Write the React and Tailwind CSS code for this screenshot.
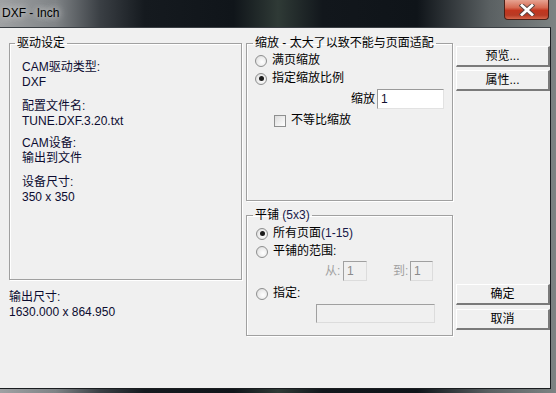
function Radio({ checked }) {
  return (
    <span className="w-[12px] h-[12px] shrink-0 rounded-full border border-[#8e8f8f] bg-[radial-gradient(circle_at_60%_60%,#ffffff_0%,#e9e9e9_60%,#cfcfcf_100%)] flex items-center justify-center">
      {checked && <span className="w-[5px] h-[5px] rounded-full bg-[#1b1b1b]" />}
    </span>
  );
}

function RadioRow({ checked, children, className = "" }) {
  return (
    <div className={"flex items-center gap-[5px] h-[15px] " + className}>
      <Radio checked={checked} />
      <span>{children}</span>
    </div>
  );
}

function Btn({ children, className = "" }) {
  return (
    <div
      className={
        "w-[94px] h-[21px] bg-[#f0f0f0] border-t border-l border-white border-b-2 border-r-2 border-b-[#7a7a7a] border-r-[#7a7a7a] flex items-center justify-center text-[12px] " +
        className
      }
    >
      {children}
    </div>
  );
}

function Field({ label, value, className = "" }) {
  return (
    <div className={className}>
      <div className="h-[15px]">{label}</div>
      <div className="h-[15px]">{value}</div>
    </div>
  );
}

export default function App() {
  return (
    <div className="w-[556px] h-[393px] overflow-hidden flex flex-col bg-[linear-gradient(90deg,#9fa1a3_0%,#7f8386_10%,#3a3f44_18%,#151a1f_26%,#10151a_42%,#2f3a36_50%,#12171c_58%,#0f1419_75%,#5a6062_88%,#7d8383_100%)] font-['Liberation_Sans','Noto_Sans_CJK_SC',sans-serif] text-[12px] leading-[15px] text-black">
      {/* title bar */}
      <div className="h-[27px] shrink-0 flex items-start justify-between">
        <div className="pl-[2px] pt-[6px] text-[12px] text-black [text-shadow:0_0_6px_#e0e0e0,0_0_10px_#c8c8c8]">
          DXF - Inch
        </div>
        <div className="mr-[7px] w-[45px] h-[20px] rounded-b-[4px] border border-t-0 border-[#4a2018] bg-[linear-gradient(180deg,#e6a392_0%,#d66a52_40%,#c2361f_55%,#b83a24_80%,#d4674c_100%)] flex items-center justify-center">
          <svg width="16" height="12" viewBox="0 0 16 12">
            <path d="M3 1.5 L13 10.5 M13 1.5 L3 10.5" stroke="#5a4440" strokeWidth="4.6" strokeLinecap="square" />
            <path d="M3 1.5 L13 10.5 M13 1.5 L3 10.5" stroke="#ffffff" strokeWidth="2.8" strokeLinecap="square" />
          </svg>
        </div>
      </div>

      {/* dialog body */}
      <div className="w-[551px] h-[362px] bg-[#f0f0f0] border-t border-t-[#3a3f44] border-r border-b border-[#1a1d20] flex pt-[8px] pl-[9px]">
        {/* left column */}
        <div className="w-[233px] flex flex-col">
          <fieldset className="h-[244px] border border-[#a0a0a0] shadow-[inset_1px_1px_0_#ffffff,1px_1px_0_#ffffff]">
            <legend className="ml-[5px] px-[2px] h-[15px]">驱动设定</legend>
            <div className="pl-[12px] pt-[9px] text-[#0c0c30]">
              <Field label="CAM驱动类型:" value="DXF" />
              <Field label="配置文件名:" value="TUNE.DXF.3.20.txt" className="mt-[9px]" />
              <Field label="CAM设备:" value="输出到文件" className="mt-[7px]" />
              <Field label="设备尺寸:" value="350 x 350" className="mt-[9px]" />
            </div>
          </fieldset>
          <Field label="输出尺寸:" value="1630.000 x 864.950" className="mt-[10px] text-[#0c0c30]" />
        </div>

        {/* middle column */}
        <div className="w-[207px] ml-[4px] flex flex-col">
          <fieldset className="h-[165px] border border-[#a0a0a0] shadow-[inset_1px_1px_0_#ffffff,1px_1px_0_#ffffff]">
            <legend className="ml-[6px] px-[2px] h-[15px]">缩放 - 太大了以致不能与页面适配</legend>
            <div className="pl-[8px] pt-[2px]">
              <RadioRow>满页缩放</RadioRow>
              <RadioRow checked className="mt-[3px]">指定缩放比例</RadioRow>
              <div className="flex items-center justify-end pr-[8px] mt-[3px] gap-[2px]">
                <span>缩放</span>
                <div className="w-[67px] h-[20px] bg-white border border-[#9a9a9a] border-b-[#e2e2e2] border-r-[#e2e2e2] pl-[3px] flex items-center text-[#101030]">
                  1
                </div>
              </div>
              <div className="flex items-center gap-[5px] ml-[19px] mt-[4px] h-[15px]">
                <span className="w-[12px] h-[12px] border border-[#8e8f8f] bg-[linear-gradient(135deg,#dcdcdc,#ffffff)]" />
                <span>不等比缩放</span>
              </div>
            </div>
          </fieldset>

          <fieldset className="mt-[7px] h-[128px] border border-[#a0a0a0] shadow-[inset_1px_1px_0_#ffffff,1px_1px_0_#ffffff]">
            <legend className="ml-[6px] px-[2px] h-[15px]">
              平铺 <span className="text-[#181848]">(5x3)</span>
            </legend>
            <div className="pl-[9px] pt-[3px]">
              <RadioRow checked>
                所有页面<span className="text-[#181848]">(1-15)</span>
              </RadioRow>
              <RadioRow className="mt-[3px]">平铺的范围:</RadioRow>
              <div className="flex items-center mt-[2px] h-[20px] text-[#a0a0a0]">
                <span className="ml-[69px] w-[18px]">从:</span>
                <div className="w-[24px] h-[20px] border border-[#a0a0a0] border-b-[#dcdcdc] border-r-[#dcdcdc] pl-[3px] flex items-center text-[#8a8a8a]">
                  1
                </div>
                <span className="ml-[26px] w-[17px]">到:</span>
                <div className="w-[23px] h-[20px] border border-[#a0a0a0] border-b-[#dcdcdc] border-r-[#dcdcdc] pl-[3px] flex items-center text-[#8a8a8a]">
                  1
                </div>
              </div>
              <RadioRow className="mt-[5px]">指定:</RadioRow>
              <div className="ml-[60px] mt-[3px] w-[119px] h-[19px] border border-[#a0a0a0] border-b-[#dcdcdc] border-r-[#dcdcdc]" />
            </div>
          </fieldset>
        </div>

        {/* right column */}
        <div className="ml-[3px] pt-[10px] flex flex-col">
          <Btn>预览...</Btn>
          <Btn className="mt-[3px]">属性...</Btn>
          <Btn className="mt-[193px]">确定</Btn>
          <Btn className="mt-[4px]">取消</Btn>
        </div>
      </div>
    </div>
  );
}
